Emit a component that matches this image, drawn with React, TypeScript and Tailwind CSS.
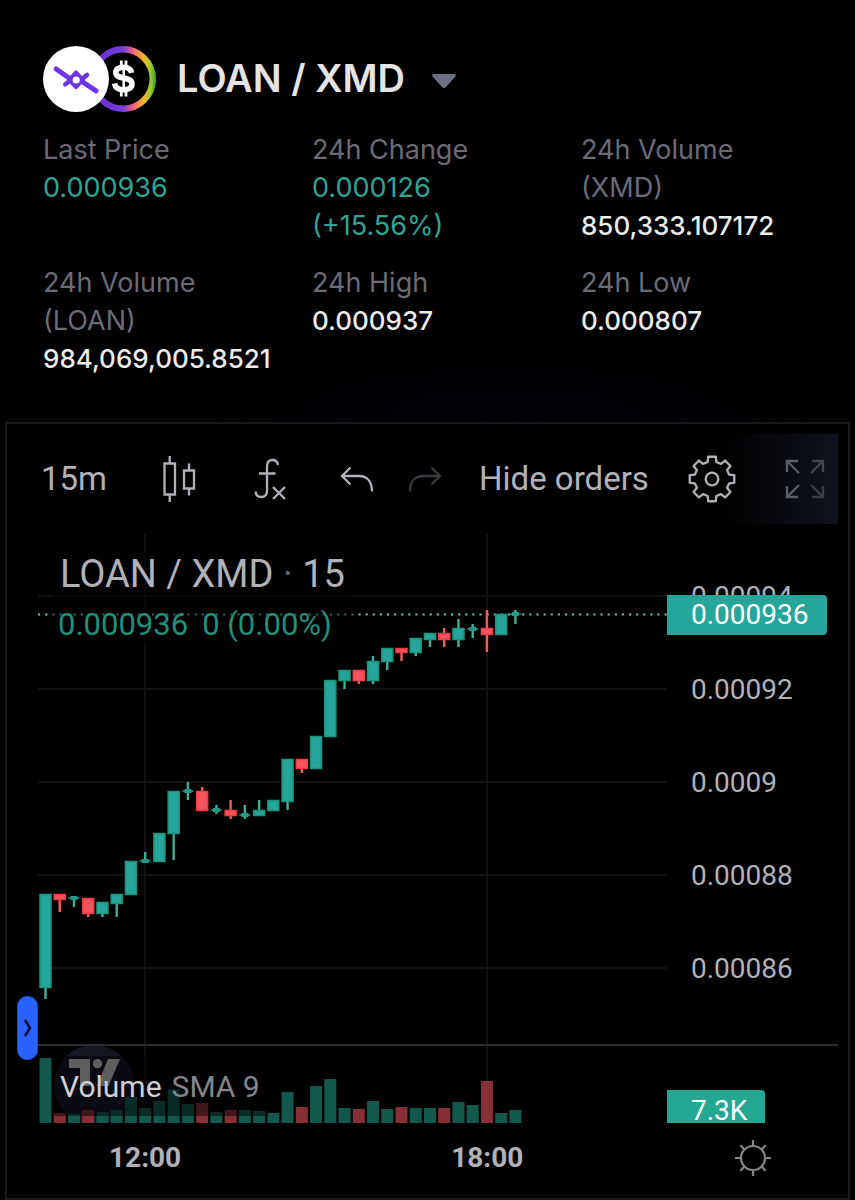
import React from "react";

type Tone = "up" | "down";

interface Candle {
  tone: Tone;
  open: number;
  close: number;
  high: number;
  low: number;
  volume: number;
}

const candle = (
  tone: Tone,
  open: number,
  close: number,
  high: number,
  low: number,
  volume: number,
): Candle => ({ tone, open, close, high, low, volume });

const CANDLES: Candle[] = [
  candle("up", 360, 453, 360, 465, 65),
  candle("down", 360, 365, 360, 378, 10),
  candle("up", 363, 365, 362, 373, 9),
  candle("down", 364, 379, 364, 383, 13),
  candle("up", 368, 379, 368, 383, 11),
  candle("up", 360, 369, 360, 383, 13),
  candle("up", 327, 360, 327, 360, 26),
  candle("up", 326, 328, 318, 329, 15),
  candle("up", 299, 327, 299, 327, 22),
  candle("up", 257, 299, 257, 326, 34),
  candle("up", 256, 258, 248, 266, 19),
  candle("down", 257, 276, 253, 277, 20),
  candle("up", 275, 277, 271, 280, 11),
  candle("down", 276, 281, 266, 285, 13),
  candle("up", 280, 282, 271, 285, 13),
  candle("up", 276, 281, 266, 281, 12),
  candle("up", 266, 276, 266, 276, 10),
  candle("up", 225, 267, 225, 276, 31),
  candle("down", 225, 234, 225, 239, 16),
  candle("up", 202, 234, 202, 234, 37),
  candle("up", 146, 202, 146, 202, 44),
  candle("up", 136, 146, 136, 155, 15),
  candle("down", 136, 146, 136, 150, 14),
  candle("up", 127, 146, 122, 150, 22),
  candle("up", 114, 127, 114, 136, 14),
  candle("down", 114, 118, 114, 127, 16),
  candle("up", 104, 118, 104, 122, 15),
  candle("up", 99, 105, 99, 113, 15),
  candle("down", 99, 105, 94, 113, 15),
  candle("up", 94, 105, 85, 113, 21),
  candle("up", 94, 96, 90, 104, 18),
  candle("down", 94, 100, 76, 118, 42),
  candle("up", 80, 100, 80, 100, 10),
  candle("up", 79, 81, 76, 90, 13),
];

const STEP = 14.24;
const centerOf = (index: number) => 7.5 + index * STEP;
const GRID_X = [107, 449];
const GRID_Y = [62, 155, 248, 341, 434];

function PairLogo() {
  return (
    <svg width="114" height="66" viewBox="0 0 114 66" aria-hidden="true">
      <defs>
        <linearGradient id="ring" x1="47" x2="114" y1="0" y2="0" gradientUnits="userSpaceOnUse">
          <stop offset="0" stopColor="#5b2bc4" />
          <stop offset="0.5" stopColor="#7a3fe0" />
          <stop offset="0.64" stopColor="#f0607a" />
          <stop offset="0.8" stopColor="#f7b52c" />
          <stop offset="0.9" stopColor="#9ccb2c" />
          <stop offset="1" stopColor="#1f9a34" />
        </linearGradient>
      </defs>
      <circle cx="80" cy="33" r="29.800" fill="#000" stroke="url(#ring)" strokeWidth="6.400" />
      <path
        d="M88.700 26.800c-.9-3.700-3.800-5.600-8.200-5.600-4.700 0-7.700 2-7.700 5.400 0 7.600 16.200 3.300 16.200 11.300 0 3.700-3.300 5.800-8.300 5.800-5.200 0-8.500-2.200-9.200-6.200"
        fill="none"
        stroke="#fff"
        strokeWidth="5.600"
      />
      <path d="M78.300 14.500v6M83 14.500v6M78.300 44v6.500M83 44v6.500" stroke="#fff" strokeWidth="2.800" />
      <path d="M80.700 22v22" stroke="#fff" strokeWidth="2.500" />
      <circle cx="33" cy="33" r="33" fill="#fff" />
      <g stroke="#6f34e4" strokeLinecap="round" strokeLinejoin="round">
        <path d="M13.200 23 27 32.800M39 35.500 53 44.800" fill="none" strokeWidth="5" />
        <path d="M22.300 38.300 28 34M44 28.800 38 34" fill="none" strokeWidth="4.500" />
        <path d="M33 26.300 40 34 33 41.300 26 34z" fill="#6f34e4" strokeWidth="3.800" />
      </g>
      <circle cx="33.200" cy="34" r="3.600" fill="#fff" />
    </svg>
  );
}

interface StatProps {
  label: string;
  unit?: string;
  value: string;
  note?: string;
  positive?: boolean;
}

function Stat({ label, unit, value, note, positive }: StatProps) {
  return (
    <div>
      <dt className="text-[27px] text-[#6b6b76]">
        <span className="block">{label}</span>
        {unit && <span className="block">{unit}</span>}
      </dt>
      <dd className={positive ? "text-[27px] text-[#32a492]" : "text-[26px] font-medium text-[#ececec]"}>
        <span className="block">{value}</span>
        {note && <span className="block">{note}</span>}
      </dd>
    </div>
  );
}

function ToolButton({ label, children }: { label: string; children: React.ReactNode }) {
  return (
    <button type="button" aria-label={label} className="size-12 shrink-0">
      <svg width="48" height="48" viewBox="0 0 48 48" fill="none" stroke="currentColor" strokeWidth="2.300">
        {children}
      </svg>
    </button>
  );
}

function gearPath(): string {
  const teeth = 8;
  const points: string[] = [];
  for (let i = 0; i < teeth; i++) {
    const mid = (i * 2 * Math.PI) / teeth - Math.PI / 2;
    const corners: [number, number][] = [
      [17.6, -0.25],
      [22.6, -0.17],
      [22.6, 0.17],
      [17.6, 0.25],
    ];
    for (const [radius, offset] of corners) {
      const x = 24 + radius * Math.cos(mid + offset);
      const y = 24 + radius * Math.sin(mid + offset);
      points.push(`${x.toFixed(2)} ${y.toFixed(2)}`);
    }
  }
  return `M${points.join("L")}Z`;
}

function Toolbar() {
  return (
    <div className="flex h-[90px] items-center overflow-hidden text-[#b2b1b8]">
      <button type="button" className="w-[138px] shrink-0 pl-6 text-left text-[33px]">
        15m
      </button>
      <div className="flex shrink-0 gap-[42px]">
        <ToolButton label="Chart type">
          <path d="M9.500 8.500h10.500v31H9.500zM14.700 1v7.500M14.700 39.500V47M29 15.500h10v18H29zM34 8.500v7M34 33.500v7" />
        </ToolButton>
        <ToolButton label="Indicators">
          <path d="M33 10c-.5-3-2.500-5-5.500-5-3.500 0-5.500 2.300-5.500 6.500v24c0 4.500-2 6.500-5.800 6.500-3.200 0-5.200-2-5.700-5.500M14 18.500h16.500M28 32l12 12M40 32 28 44" />
        </ToolButton>
      </div>
      <div className="ml-10 flex shrink-0 gap-5">
        <ToolButton label="Undo">
          <path d="M17.500 12.500 9 21l8.500 8.500M9 21h17c8 0 13 5.500 13 15.500" />
        </ToolButton>
        <span className="flex text-[#39383d]">
          <ToolButton label="Redo">
            <path d="M30.500 12.500 39 21l-8.500 8.500M39 21H22c-8 0-13 5.500-13 15.500" />
          </ToolButton>
        </span>
      </div>
      <button type="button" className="ml-[30px] shrink-0 text-[33px]">
        Hide orders
      </button>
      <div className="ml-auto flex h-full items-center bg-linear-to-r from-transparent from-25% to-[#10131f] pr-[9px]">
        <div className="flex gap-[45px]">
          <ToolButton label="Settings">
            <path d={gearPath()} strokeLinejoin="round" />
            <circle cx="24" cy="24" r="6.300" />
          </ToolButton>
          <span className="flex text-[#5b5d65]">
            <ToolButton label="Fullscreen">
              <path d="M18 18 6 6M6 17V6h11M18 30 6 42M6 31v11h11" />
              <path d="M30 18 42 6M31 6h11v11" opacity="0.700" />
              <path d="M30 30l12 12M42 31v11H31" opacity="0.600" />
            </ToolButton>
          </span>
        </div>
      </div>
    </div>
  );
}

function PriceChart() {
  return (
    <svg
      className="block h-[510px] w-full"
      viewBox="0 0 629 510"
      preserveAspectRatio="none"
      role="img"
      aria-label="LOAN / XMD candles"
    >
      <g fill="#111113">
        {GRID_X.map((x) => (
          <rect key={x} x={x - 1} y="0" width="2" height="510" />
        ))}
        {GRID_Y.map((y) => (
          <rect key={y} x="0" y={y - 1} width="629" height="2" />
        ))}
      </g>
      <line
        x1="0"
        x2="629"
        y1="80.500"
        y2="80.500"
        stroke="#5cc4b0"
        strokeWidth="2.200"
        strokeDasharray="2.200 4.920"
      />
      {CANDLES.map((c, i) => {
        const x = centerOf(i);
        const up = c.tone === "up";
        const thin = c.close - c.open < 3;
        return (
          <g key={i}>
            <rect x={x - 1.2} y={c.high} width="2.4" height={c.low - c.high} fill={up ? "#45ab93" : "#f05c60"} />
            {thin ? (
              <>
                <rect x={x - 5.5} y={c.open} width="11" height="2" fill="#17715f" />
                <rect x={x - 3.5} y={c.open - 1} width="7" height="4" fill="#219b85" />
              </>
            ) : (
              <rect
                x={x - 5.5}
                y={c.open + 0.5}
                width="11"
                height={c.close - c.open}
                fill={up ? "#26a69a" : "#f7525f"}
                stroke={up ? "#1b957c" : "#f03c42"}
                strokeWidth="1.500"
              />
            )}
          </g>
        );
      })}
    </svg>
  );
}

function VolumeChart() {
  return (
    <svg
      className="block h-[77px] w-full"
      viewBox="0 0 629 77"
      preserveAspectRatio="none"
      role="img"
      aria-label="Volume"
    >
      {GRID_X.map((x) => (
        <rect key={x} x={x - 1} y="0" width="2" height="77" fill="#111113" />
      ))}
      <circle cx="56" cy="39" r="40" fill="#141724" />
      {CANDLES.map((c, i) => (
        <rect
          key={i}
          x={centerOf(i) - 6}
          y={77 - c.volume}
          width="12"
          height={c.volume}
          fill={c.tone === "up" ? "#12594c" : "#862f36"}
        />
      ))}
      <g fill="#bdbdbd">
        <path d="M31 13h21v27H42V22H31z" />
        <circle cx="59.500" cy="17.700" r="4.700" />
        <path d="M70 13h12L70.500 40H59z" />
      </g>
    </svg>
  );
}

export default function App() {
  return (
    <main className="min-h-screen bg-black bg-[radial-gradient(ellipse_380px_90px_at_60%_420px,#040109,#000000)] pt-[46px] text-[#b2b1b8] [font-family:Roboto,sans-serif]">
      <header className="pl-[43px] pr-[5px] [font-family:Inter,sans-serif]">
        <div className="flex h-[66px] items-center">
          <PairLogo />
          <button type="button" className="ml-5 flex items-center gap-[27px] text-[#e4e4e4]">
            <h1 className="pb-[2px] text-[38px] leading-none font-semibold">LOAN / XMD</h1>
            <svg className="mt-1" width="24" height="15" viewBox="0 0 24 15" aria-hidden="true">
              <path d="M2 0h20c1.800 0 2.500 1.500 1.300 2.800L13.500 13.500c-1 1-2 1-3 0L.7 2.800C-.5 1.500.2 0 2 0z" fill="#6b7080" />
            </svg>
          </button>
        </div>
        <dl className="mt-[19px] grid grid-cols-3 gap-y-[19px] leading-[38px]">
          <Stat label="Last Price" value="0.000936" positive />
          <Stat label="24h Change" value="0.000126" note="(+15.56%)" positive />
          <Stat label="24h Volume" unit="(XMD)" value="850,333.107172" />
          <Stat label="24h Volume" unit="(LOAN)" value="984,069,005.8521" />
          <Stat label="24h High" value="0.000937" />
          <Stat label="24h Low" value="0.000807" />
        </dl>
      </header>

      <section className="relative mx-[5px] mt-11 border-2 border-[#1a191d] bg-black/60 px-[10px] pt-[10px]">
        <Toolbar />
        <div className="mt-[10px] pl-[21px]">
          <div className="flex border-b-2 border-[#2c2d31]">
            <div className="relative min-w-0 flex-1">
              <PriceChart />
              <div className="absolute top-[17px] left-[14px] bg-black/50 pr-2 pl-[6px] whitespace-nowrap">
                <h2 className="pl-[2px] text-[38px] leading-[46px]">
                  LOAN / XMD <span className="text-[#65656a]">·</span> 15
                </h2>
                <p className="mt-2 flex gap-[14px] text-[31px] leading-10 text-[#229078]">
                  <span>0.000936</span>
                  <span>0 (0.00%)</span>
                </p>
              </div>
            </div>
            <div className="relative w-[171px] shrink-0 pt-4 text-[28px] leading-[93px]">
              <ul className="pl-6">
                <li>0.00094</li>
                <li>0.00092</li>
                <li>0.0009</li>
                <li>0.00088</li>
                <li>0.00086</li>
              </ul>
              <div className="absolute top-[61px] left-0 rounded-r bg-[#26a69a] pr-[18px] pl-6 leading-10 text-white">
                0.000936
              </div>
            </div>
          </div>

          <div className="flex">
            <div className="relative min-w-0 flex-1">
              <VolumeChart />
              <p className="absolute top-[10px] left-[14px] flex h-[60px] items-center gap-[10px] bg-black/50 pr-2 pl-2 text-[30px] whitespace-nowrap">
                <span className="text-[#d0cfd5]">Volume</span>
                <span className="text-[#86858b]">SMA 9</span>
              </p>
            </div>
            <div className="flex w-[171px] shrink-0 items-end">
              <div className="h-[33px] rounded-tr bg-[#24a893] pt-[7px] pr-[18px] pl-6 text-[28px] leading-[28px] text-white">
                7.3K
              </div>
            </div>
          </div>

          <div className="flex h-[75px] items-center pb-[5px]">
            <div className="flex min-w-0 flex-1 gap-[270px] pl-[71px] text-[28px] font-bold">
              <time>12:00</time>
              <time>18:00</time>
            </div>
            <div className="flex w-[171px] shrink-0 justify-center">
              <button type="button" aria-label="Scale settings">
                <svg width="36" height="36" viewBox="0 0 36 36" fill="none" stroke="#86868b" strokeWidth="2.200">
                  <circle cx="18" cy="18" r="12" />
                  <path d="M18 0v6M18 30v6M0 18h6M30 18h6M5.300 5.300l4.200 4.200M26.500 26.500l4.200 4.200M30.700 5.300l-4.200 4.200M9.500 26.500l-4.200 4.200" />
                </svg>
              </button>
            </div>
          </div>
        </div>

        <button
          type="button"
          aria-label="Show drawing tools"
          className="absolute bottom-[138px] left-[10px] flex h-16 w-[21px] items-center justify-center rounded-[10px] border border-[#1e4fd6] bg-[#2962ff]"
        >
          <svg width="8" height="18" viewBox="0 0 8 18" fill="none" stroke="#06102e" strokeWidth="2.400">
            <path d="M1 1l5 8-5 8" />
          </svg>
        </button>
      </section>
    </main>
  );
}
